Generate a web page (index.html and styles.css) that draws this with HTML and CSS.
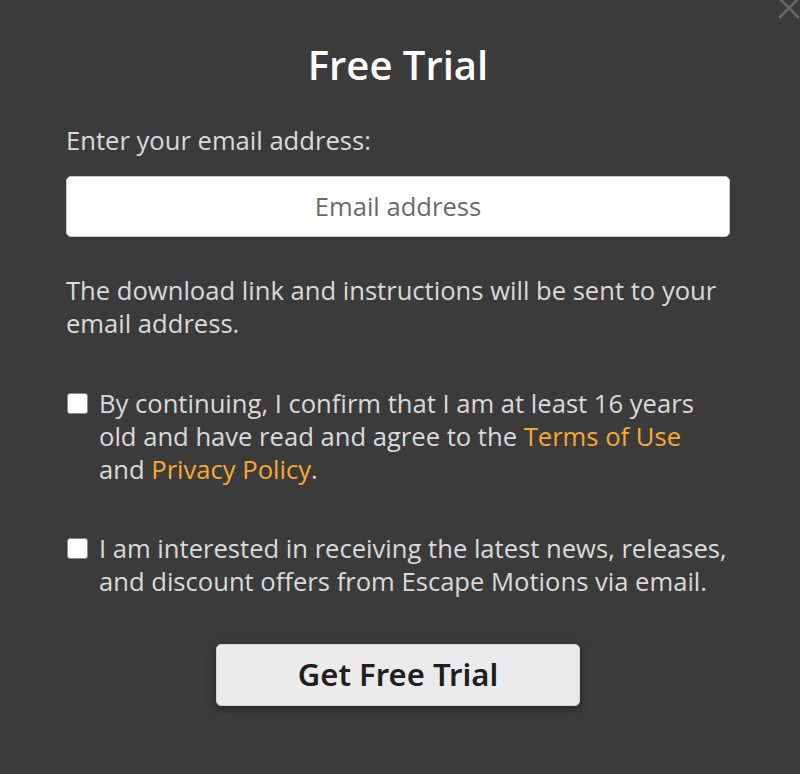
FILE: index.html
```html
<!DOCTYPE html>
<html lang="en">
<head>
<meta charset="utf-8">
<title>Free Trial</title>
<link rel="stylesheet" href="styles.css">
</head>
<body>
<div class="modal">
  <button class="close" aria-label="Close">
    <svg width="22" height="22" viewBox="0 0 22 22"><path d="M2 2 L20 20 M20 2 L2 20" stroke="#676767" stroke-width="2.6" stroke-linecap="round"/></svg>
  </button>
  <form class="form">
    <h1 class="title">Free Trial</h1>
    <label class="label" for="email">Enter your email address:</label>
    <input class="input" id="email" type="email" placeholder="Email address">
    <p class="note">The download link and instructions will be sent to your email address.</p>
    <label class="check">
      <input type="checkbox" class="box">
      <span>By continuing, I confirm that I am at least 16 years old and have read and agree to the <a href="#" class="link">Terms of Use</a> and <a href="#" class="link">Privacy Policy</a>.</span>
    </label>
    <label class="check check-second">
      <input type="checkbox" class="box">
      <span>I am interested in receiving the latest news, releases, and discount offers from Escape Motions via email.</span>
    </label>
    <div class="actions">
      <button type="button" class="submit">Get Free Trial</button>
    </div>
  </form>
</div>
</body>
</html>
```

FILE: styles.css
```css
html, body {
  margin: 0;
  padding: 0;
  background: #3b3b3b;
}
body {
  font-family: "Open Sans", "Noto Sans", sans-serif;
  color: #dadada;
  width: 800px;
  height: 774px;
  overflow: hidden;
}
.modal {
  position: relative;
  height: 774px;
}
.close {
  position: absolute;
  top: -3px;
  right: 0;
  border: 0;
  background: none;
  padding: 0;
  width: 22px;
  height: 22px;
}
.form {
  display: flex;
  flex-direction: column;
  width: 664px;
  margin-left: 66px;
  padding-top: 41px;
}
.title {
  margin: 0;
  text-align: center;
  font-size: 40px;
  line-height: 48px;
  font-weight: 600;
  color: #ffffff;
}
.label {
  margin-top: 35px;
  font-size: 25.6px;
  line-height: 33px;
}
.input {
  margin-top: 19px;
  box-sizing: border-box;
  height: 61px;
  width: 664px;
  border: 1px solid #c9c9c9;
  border-radius: 5px;
  background: #fff;
  text-align: center;
  font-family: "Open Sans", "Noto Sans", sans-serif;
  font-size: 25.6px;
  color: #333;
}
.input::placeholder {
  color: #6b6b6b;
}
.note {
  margin: 37px 0 0;
  font-size: 25.6px;
  line-height: 33px;
}
.check {
  display: flex;
  align-items: flex-start;
  gap: 11px;
  margin-top: 47px;
  font-size: 25.6px;
  line-height: 33px;
}
.check-second {
  margin-top: 46px;
}
.box {
  appearance: none;
  -webkit-appearance: none;
  flex: none;
  margin: 6px 0 0 1px;
  width: 21px;
  height: 21px;
  box-sizing: border-box;
  background: #fff;
  border: 1px solid #8a8a8a;
  border-radius: 3px;
}
.link {
  color: #f7a933;
  text-decoration: none;
}
.actions {
  display: flex;
  justify-content: center;
  margin-top: 46px;
}
.submit {
  width: 364px;
  height: 62px;
  border: 1px solid #d0d0d0;
  border-radius: 5px;
  background: #ebebeb;
  box-shadow: 0 3px 8px rgba(0, 0, 0, 0.35);
  font-family: "Noto Sans", "Open Sans", sans-serif;
  font-size: 31px;
  font-weight: 600;
  color: #1f1f1f;
  padding: 0 0 3px;
}
```
